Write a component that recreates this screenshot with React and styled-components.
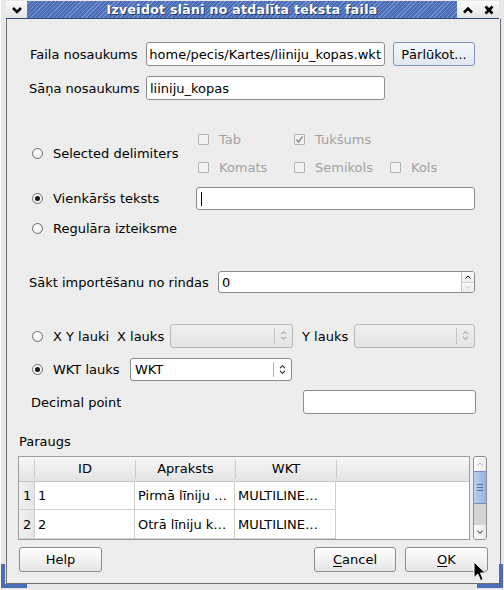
import React from 'react'
import styled, { createGlobalStyle, css } from 'styled-components'

const Global = createGlobalStyle`
  html, body { margin: 0; padding: 0; background: #e6e6e6; }
  body {
    font-family: "DejaVu Sans", "Liberation Sans", sans-serif;
    font-size: 13px;
    color: #000;
  }
  * { box-sizing: border-box; }
`

const Frame = styled.div`
  position: relative;
  width: 504px;
  height: 590px;
  overflow: hidden;
  background: #e8e8e8;
  border-left: 1px solid #fff;
  display: flex;
  flex-direction: column;
  &::before, &::after {
    content: "";
    position: absolute;
    bottom: 2px;
    width: 22px;
    height: 20px;
    border-bottom: 4px solid #4a6cb5;
  }
  &::before { left: 0; border-left: 4px solid #4a6cb5; }
  &::after { right: 1px; border-right: 4px solid #4a6cb5; }
`

const TitleBar = styled.div`
  display: flex;
  height: 19px;
  padding: 1px 5px 0 5px;
`

const TitleBtn = styled.div`
  width: ${p => p.$w}px;
  display: flex;
  align-items: center;
  justify-content: center;
  background: linear-gradient(#fbfbfb, #e4e4e4);
  border-bottom: 1px solid #2e4a86;
`

const Caption = styled.div`
  flex: 1;
  display: flex;
  align-items: center;
  justify-content: center;
  color: #fff;
  font-weight: bold;
  font-size: 12.5px;
  letter-spacing: 0.3px;
  text-shadow: 1px 1px 0 #23386a;
  background: repeating-linear-gradient(135deg, #4c6db3 0 2px, #7390d0 2px 3px);
  border-bottom: 1px solid #2e4a86;
`

const Body = styled.div`
  margin-left: 5px;
  width: 495px;
  height: 565px;
  background: #ededed;
  border-left: 1px solid #6f6f6f;
  border-right: 1px solid #6f6f6f;
  border-bottom: 1px solid #6f6f6f;
  padding: 0 12px 0 11px;
  display: flex;
  flex-direction: column;
`

const Group = styled.div`
  margin: 0 12px 0 11px;
  display: flex;
  flex-direction: column;
`

const Row = styled.div`
  display: flex;
  align-items: center;
  margin-top: ${p => p.$mt}px;
  height: ${p => p.$h}px;
  justify-content: ${p => p.$spread ? 'space-between' : 'flex-start'};
`

const Label = styled.span`
  width: ${p => (p.$w ? `${p.$w}px` : 'auto')};
  padding-left: ${p => p.$pl || 0}px;
  flex-shrink: 0;
  white-space: nowrap;
`

const Field = styled.div`
  width: ${p => p.$w}px;
  height: 100%;
  background: #fff;
  border: 1px solid #8c8c8c;
  border-radius: 3px;
  padding: 0 3px;
  display: flex;
  align-items: center;
  justify-content: ${p => (p.$end ? 'flex-end' : 'flex-start')};
  overflow: hidden;
  white-space: nowrap;
  flex-shrink: 0;
`

const Caret = styled.span`
  width: 1px;
  height: 14px;
  background: #000;
  margin-left: 1px;
`

const Button = styled.button`
  width: ${p => p.$w}px;
  height: 100%;
  font: inherit;
  color: #000;
  border-radius: 3px;
  padding: 0;
  margin-left: ${p => p.$ml || 0}px;
  border: 1px solid ${p => (p.$hot ? '#7d95bd' : '#8d8d8d')};
  background: ${p => (p.$hot
    ? 'linear-gradient(#f6f9fd, #dfe7f2)'
    : 'linear-gradient(#ffffff, #e6e6e6)')};
  u { text-decoration: underline; text-underline-offset: 2px; }
`

const RadioItem = styled.div`
  width: ${p => p.$w}px;
  flex-shrink: 0;
  display: flex;
  align-items: center;
  gap: 10px;
  padding-left: 3px;
  white-space: nowrap;
`

const Radio = styled.span`
  width: 11px;
  height: 11px;
  border-radius: 50%;
  border: 1px solid #6e6e6e;
  background: radial-gradient(circle at 40% 35%, #fff, #e9e9e9);
  display: flex;
  align-items: center;
  justify-content: center;
  flex-shrink: 0;
  ${p => p.$on && css`
    &::after {
      content: "";
      width: 5px;
      height: 5px;
      border-radius: 50%;
      background: #1a1a1a;
    }
  `}
`

const Delims = styled.div`
  display: grid;
  grid-template-columns: 96px 96px 96px;
  grid-auto-rows: 28px;
`

const CheckItem = styled.div`
  display: flex;
  align-items: center;
  gap: 10px;
  color: #a3a3a3;
  white-space: nowrap;
`

const Check = styled.span`
  width: 11px;
  height: 11px;
  border: 1px solid #b3b3b3;
  border-radius: 1px;
  background: #f2f2f2;
  display: flex;
  align-items: center;
  justify-content: center;
`

const Combo = styled.div`
  width: ${p => p.$w}px;
  height: 100%;
  border: 1px solid ${p => (p.$off ? '#b8b8b8' : '#8c8c8c')};
  border-radius: 3px;
  background: ${p => (p.$off ? 'linear-gradient(#f0f0f0, #e4e4e4)' : '#fff')};
  display: flex;
  align-items: center;
  padding-left: 4px;
  flex-shrink: 0;
`

const ComboText = styled.span`
  flex: 1;
`

const ComboArrow = styled.span`
  width: 18px;
  height: 70%;
  border-left: 1px solid ${p => (p.$off ? '#c6c6c6' : '#b0b0b0')};
  display: flex;
  align-items: center;
  justify-content: center;
`

const Spin = styled(Field)`
  padding: 0 0 0 3px;
`

const SpinText = styled.span`
  flex: 1;
`

const SpinBtns = styled.div`
  width: 13px;
  height: 100%;
  border-left: 1px solid #c0c0c0;
  display: flex;
  flex-direction: column;
  & > span {
    flex: 1;
    display: flex;
    align-items: center;
    justify-content: center;
    background: linear-gradient(#fdfdfd, #ececec);
  }
  & > span + span { border-top: 1px solid #d0d0d0; }
`

const Section = styled.div`
  margin-top: ${p => p.$mt}px;
  height: ${p => p.$h}px;
  display: flex;
  align-items: center;
  padding-left: 1px;
`

const TableWrap = styled.div`
  margin-top: 6px;
  height: 84px;
  display: flex;
  gap: 3px;
`

const Table = styled.div`
  width: 452px;
  height: 100%;
  border: 1px solid #9d9d9d;
  background: #fff;
  display: flex;
  flex-direction: column;
`

const HeadRow = styled.div`
  display: flex;
  height: 25px;
  background: linear-gradient(#f7f7f7, #e3e3e3);
  border-bottom: 1px solid #c6c6c6;
`

const HeadCell = styled.div`
  width: ${p => p.$w}px;
  flex-shrink: 0;
  display: flex;
  align-items: center;
  justify-content: center;
  border-right: 1px solid #cdcdcd;
  margin: 3px 0;
`

const BodyRow = styled.div`
  display: flex;
  height: 29px;
`

const Cell = styled.div`
  width: ${p => p.$w}px;
  flex-shrink: 0;
  display: flex;
  align-items: center;
  padding-left: ${p => (p.$head ? 4 : 3)}px;
  border-right: 1px solid #cfcfcf;
  border-bottom: 1px solid #cfcfcf;
  white-space: nowrap;
  overflow: hidden;
  background: ${p => (p.$head ? 'linear-gradient(90deg, #f2f2f2, #e4e4e4)' : '#fff')};
`

const Scroll = styled.div`
  width: 14px;
  height: 100%;
  border: 1px solid #8f8f8f;
  border-radius: 3px;
  background: #d4d4d4;
  display: flex;
  flex-direction: column;
  overflow: hidden;
`

const ScrollBtn = styled.div`
  height: 14px;
  background: linear-gradient(90deg, #fcfcfc, #eaeaea);
  display: flex;
  align-items: center;
  justify-content: center;
`

const Thumb = styled.div`
  height: 33px;
  background: linear-gradient(90deg, #b9cdee, #97b3e2);
  border-top: 1px solid #7791c3;
  border-bottom: 1px solid #7791c3;
  display: flex;
  flex-direction: column;
  align-items: center;
  justify-content: center;
  gap: 2px;
  & > i { width: 6px; height: 1px; background: #5873a6; }
`

const Trough = styled.div`
  flex: 1;
`

const Buttons = styled.div`
  margin-top: 7px;
  height: 25px;
  display: flex;
  align-items: center;
`

const Spacer = styled.div`
  flex: 1;
`

const Pointer = styled.svg`
  position: absolute;
  left: 472px;
  top: 561px;
`

const Chevron = ({ up, color = '#000', size = 12, w = 2.6 }) => (
  <svg width={size} height={size} viewBox="0 0 12 12">
    <path d={up ? 'M2 8.5 L6 4.5 L10 8.5' : 'M2 4 L6 8 L10 4'} fill="none" stroke={color} strokeWidth={w} />
  </svg>
)

const Cross = () => (
  <svg width="12" height="12" viewBox="0 0 12 12">
    <path d="M2.5 2.5 L9.5 9.5 M9.5 2.5 L2.5 9.5" stroke="#000" strokeWidth="2.8" />
  </svg>
)

const UpDown = ({ color }) => (
  <svg width="7" height="11" viewBox="0 0 7 11">
    <path d="M1 4.2 L3.5 1.7 L6 4.2 M1 6.8 L3.5 9.3 L6 6.8" fill="none" stroke={color} strokeWidth="1.1" />
  </svg>
)

const Tick = () => (
  <svg width="9" height="9" viewBox="0 0 9 9">
    <path d="M1.5 4.5 L3.5 7 L7.5 1.5" fill="none" stroke="#8a8a8a" strokeWidth="1.4" />
  </svg>
)

const columns = [
  { name: 'ID', w: 101 },
  { name: 'Apraksts', w: 100 },
  { name: 'WKT', w: 101 },
]

const rows = [
  ['1', '1', 'Pirmā līniju …', 'MULTILINE…'],
  ['2', '2', 'Otrā līniju k…', 'MULTILINE…'],
]

const delimiters = [
  { name: 'Tab' },
  { name: 'Tukšums', on: true },
  { name: '' },
  { name: 'Komats' },
  { name: 'Semikols' },
  { name: 'Kols' },
]

export default function App() {
  return (
    <Frame>
      <Global />
      <TitleBar>
        <TitleBtn $w={21}><Chevron /></TitleBtn>
        <Caption>Izveidot slāni no atdalīta teksta faila</Caption>
        <TitleBtn $w={21}><Chevron up /></TitleBtn>
        <TitleBtn $w={21}><Cross /></TitleBtn>
      </TitleBar>

      <Body>
        <Group>
          <Row $mt={23} $h={24}>
            <Label $w={117} $pl={1}>Faila nosaukums</Label>
            <Field $w={239} $end>home/pecis/Kartes/liiniju_kopas.wkt</Field>
            <Button $w={82} $ml={8} $hot>Pārlūkot...</Button>
          </Row>
          <Row $mt={10} $h={24}>
            <Label $w={117}>Sāņa nosaukums</Label>
            <Field $w={239}>liiniju_kopas</Field>
          </Row>

          <Row $mt={25} $h={56}>
            <RadioItem $w={169}><Radio />Selected delimiters</RadioItem>
            <Delims>
              {delimiters.map((d, i) => (
                d.name ? (
                  <CheckItem key={i}>
                    <Check>{d.on && <Tick />}</Check>{d.name}
                  </CheckItem>
                ) : <span key={i} />
              ))}
            </Delims>
          </Row>
          <Row $mt={6} $h={23}>
            <RadioItem $w={167}><Radio $on />Vienkāršs teksts</RadioItem>
            <Field $w={279}><Caret /></Field>
          </Row>
          <Row $mt={8} $h={20}>
            <RadioItem $w={200}><Radio />Regulāra izteiksme</RadioItem>
          </Row>

          <Row $mt={33} $h={22}>
            <Label $w={189}>Sākt importēšanu no rindas</Label>
            <Spin $w={257}>
              <SpinText>0</SpinText>
              <SpinBtns>
                <span><Chevron up size={8} w={1.4} /></span>
                <span><Chevron size={8} w={1} color="#a8a8a8" /></span>
              </SpinBtns>
            </Spin>
          </Row>

          <Row $mt={31} $h={24}>
            <RadioItem $w={88}><Radio />X Y lauki</RadioItem>
            <Label $w={53}>X lauks</Label>
            <Combo $w={123} $off>
              <ComboText />
              <ComboArrow $off><UpDown color="#aaa" /></ComboArrow>
            </Combo>
            <Label $w={61} $pl={9}>Y lauks</Label>
            <Combo $w={121} $off>
              <ComboText />
              <ComboArrow $off><UpDown color="#aaa" /></ComboArrow>
            </Combo>
          </Row>
          <Row $mt={10} $h={23}>
            <RadioItem $w={101}><Radio $on />WKT lauks</RadioItem>
            <Combo $w={162}>
              <ComboText>WKT</ComboText>
              <ComboArrow><UpDown color="#222" /></ComboArrow>
            </Combo>
          </Row>
          <Row $mt={9} $h={24} $spread>
            <Label $pl={2}>Decimal point</Label>
            <Field $w={173} />
          </Row>
        </Group>

        <Section $mt={18} $h={18}>Paraugs</Section>

        <TableWrap>
          <Table>
            <HeadRow>
              <HeadCell $w={16} />
              {columns.map(c => <HeadCell key={c.name} $w={c.w}>{c.name}</HeadCell>)}
            </HeadRow>
            {rows.map(r => (
              <BodyRow key={r[0]}>
                <Cell $w={16} $head>{r[0]}</Cell>
                <Cell $w={100}>{r[1]}</Cell>
                <Cell $w={100}>{r[2]}</Cell>
                <Cell $w={101}>{r[3]}</Cell>
              </BodyRow>
            ))}
          </Table>
          <Scroll>
            <ScrollBtn><Chevron up size={8} w={1} color="#9a9a9a" /></ScrollBtn>
            <Thumb><i /><i /><i /></Thumb>
            <Trough />
            <ScrollBtn><Chevron size={8} w={1.4} /></ScrollBtn>
          </Scroll>
        </TableWrap>

        <Buttons>
          <Button $w={83} $ml={1}>Help</Button>
          <Spacer />
          <Button $w={82}><u>C</u>ancel</Button>
          <Button $w={83} $ml={9}><u>O</u>K</Button>
        </Buttons>
      </Body>

      <Pointer width="14" height="22" viewBox="0 0 14 22">
        <path d="M1 1 L1 16.5 L4.8 13 L7.6 19.6 L10.2 18.5 L7.5 12 L12.5 12 Z" fill="#000" stroke="#fff" strokeWidth="1" />
      </Pointer>
    </Frame>
  )
}
